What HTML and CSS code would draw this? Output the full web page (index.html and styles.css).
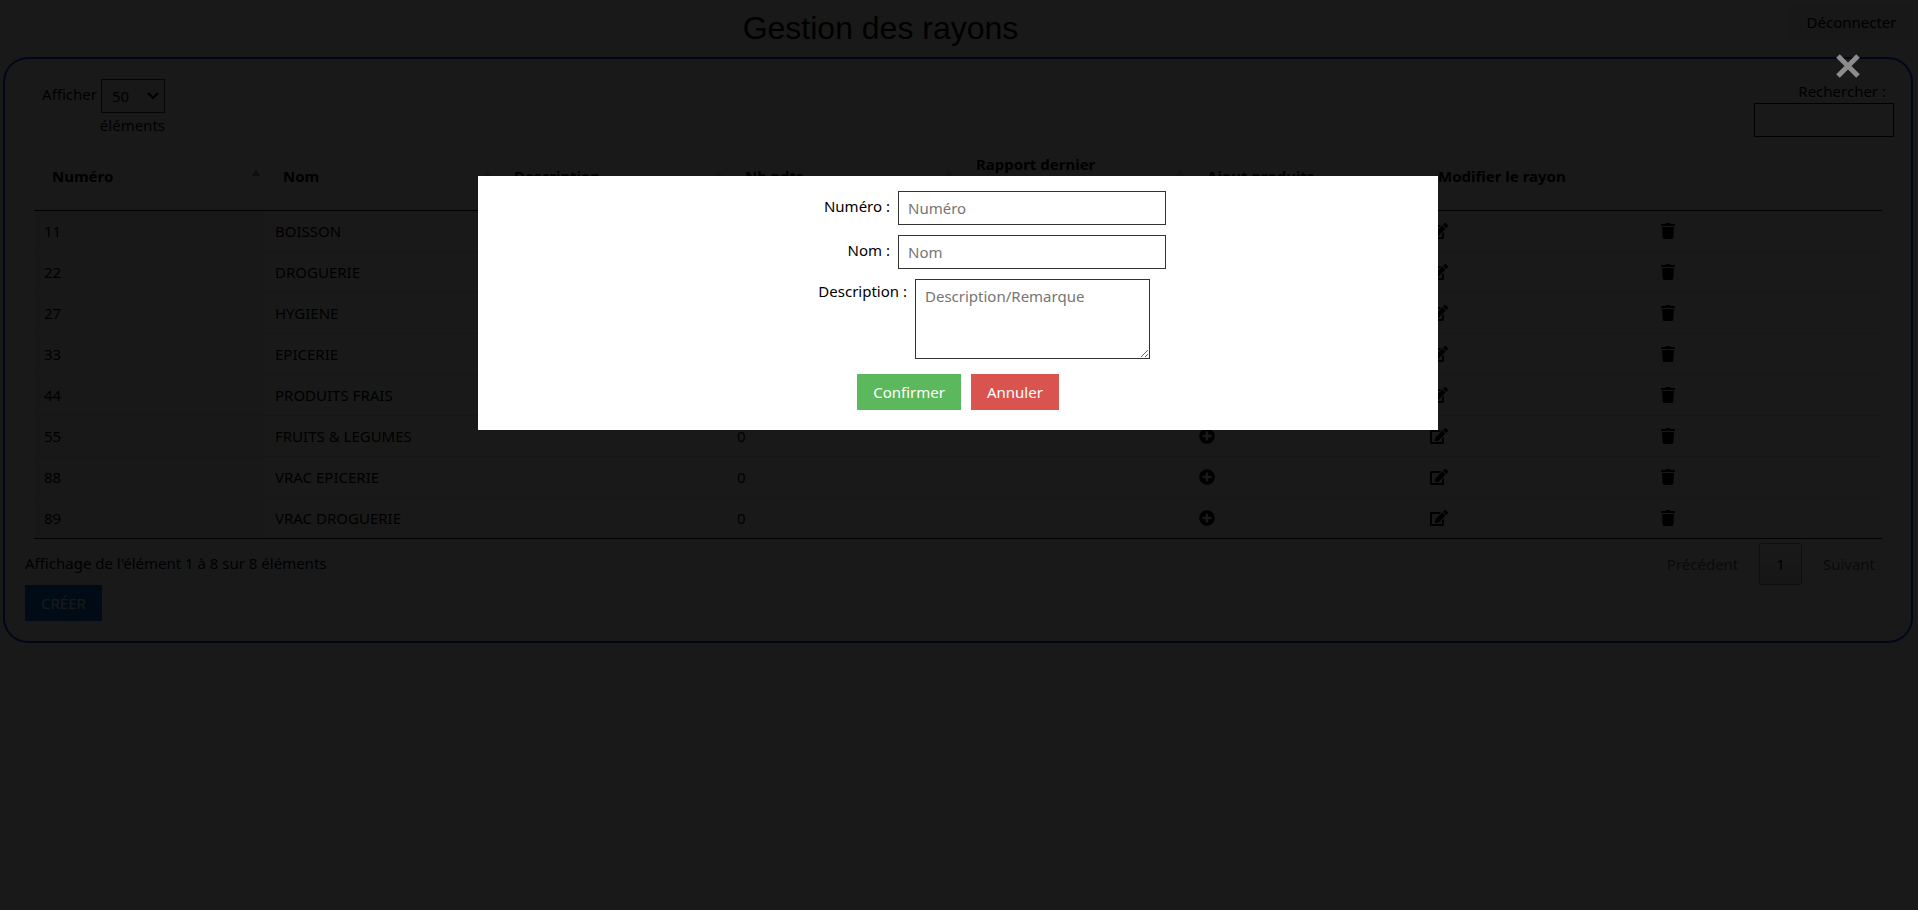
FILE: index.html
```html
<!DOCTYPE html>
<html lang="fr">
  <head>
    <meta charset="UTF-8" />
    <title>Gestion des rayons</title>
    <link rel="stylesheet" href="styles.css">
  </head>

  <body>
    <!-- icônes -->
    <svg class="sprite">
      <symbol id="plus" viewBox="0 0 512 512"><path d="M256 8C119 8 8 119 8 256s111 248 248 248 248-111 248-248S393 8 256 8zm144 276c0 6.600-5.400 12-12 12h-92v92c0 6.600-5.400 12-12 12h-56c-6.600 0-12-5.400-12-12v-92h-92c-6.600 0-12-5.400-12-12v-56c0-6.600 5.400-12 12-12h92v-92c0-6.600 5.400-12 12-12h56c6.600 0 12 5.400 12 12v92h92c6.600 0 12 5.400 12 12v56z" /></symbol>
      <symbol id="edit" viewBox="0 0 576 512"><path d="M402.600 83.200l90.200 90.200c3.800 3.800 3.800 10 0 13.800L274.400 405.600l-92.800 10.300c-12.400 1.400-22.900-9.100-21.500-21.500l10.300-92.800L388.800 83.200c3.800-3.800 10-3.800 13.800 0zm162-22.900l-48.800-48.800c-15.200-15.200-39.900-15.200-55.200 0l-35.400 35.400c-3.800 3.800-3.800 10 0 13.800l90.200 90.200c3.800 3.800 10 3.800 13.800 0l35.400-35.400c15.200-15.300 15.200-40 0-55.200zM384 346.200V448H64V128h229.800c3.200 0 6.200-1.300 8.500-3.500l40-40c7.600-7.600 2.200-20.500-8.500-20.500H48C21.500 64 0 85.500 0 112v352c0 26.500 21.500 48 48 48h352c26.500 0 48-21.500 48-48V306.200c0-10.700-12.900-16-20.500-8.500l-40 40c-2.200 2.300-3.500 5.300-3.500 8.500z" /></symbol>
      <symbol id="trash" viewBox="0 0 448 512"><path d="M432 32H312l-9.400-18.700A24 24 0 0 0 281.100 0H166.800a23.720 23.720 0 0 0-21.400 13.300L136 32H16A16 16 0 0 0 0 48v32a16 16 0 0 0 16 16h416a16 16 0 0 0 16-16V48a16 16 0 0 0-16-16zM53.200 467a48 48 0 0 0 47.900 45h245.800a48 48 0 0 0 47.900-45L416 128H32z" /></symbol>
    </svg>

    <header class="top">
      <h1>Gestion des rayons</h1>
      <button type="button" class="btn logout">Déconnecter</button>
    </header>

    <main class="panel">
      <div class="tools">
        <div class="length">
          <label for="length">Afficher</label>
          <div class="select">
            <select id="length">
              <option>10</option>
              <option>25</option>
              <option selected>50</option>
              <option>100</option>
            </select>
            <svg viewBox="0 0 12 8"><path d="M1 1l5 5 5-5" /></svg>
          </div>
          <span>éléments</span>
        </div>
        <div class="filter">
          <label for="search">Rechercher :</label>
          <input type="search" id="search" />
        </div>
      </div>

      <table>
        <thead>
          <tr>
            <th class="sort asc">Numéro</th>
            <th class="sort">Nom</th>
            <th class="sort">Description</th>
            <th class="sort">Nb pdts</th>
            <th class="sort">Rapport dernier inventaire</th>
            <th>Ajout produits</th>
            <th>Modifier le rayon</th>
            <th></th>
          </tr>
        </thead>
        <tbody></tbody>
      </table>

      <div class="bottom">
        <div class="info">Affichage de l'élément 1 à 8 sur 8 éléments</div>
        <nav class="pages">
          <button type="button" disabled>Précédent</button>
          <button type="button" class="current">1</button>
          <button type="button" disabled>Suivant</button>
        </nav>
      </div>
      <button type="button" class="btn create">CRÉER</button>
    </main>

    <!-- fenêtre de création d'un rayon -->
    <div class="modal">
      <button type="button" class="close" aria-label="Fermer">
        <svg viewBox="0 0 24 24"><path d="M2 2l20 20M22 2L2 22" /></svg>
      </button>
      <form class="modal-content">
        <div class="row">
          <label for="numero">Numéro :</label>
          <input type="text" id="numero" placeholder="Numéro" />
        </div>
        <div class="row">
          <label for="nom">Nom :</label>
          <input type="text" id="nom" placeholder="Nom" />
        </div>
        <div class="row area">
          <label for="description">Description :</label>
          <textarea id="description" placeholder="Description/Remarque"></textarea>
        </div>
        <div class="actions">
          <button type="button" class="btn success">Confirmer</button>
          <button type="button" class="btn danger">Annuler</button>
        </div>
      </form>
    </div>

    <script>
      const rayons = [
        [11, "BOISSON"],
        [22, "DROGUERIE"],
        [27, "HYGIENE"],
        [33, "EPICERIE"],
        [44, "PRODUITS FRAIS"],
        [55, "FRUITS &amp; LEGUMES"],
        [88, "VRAC EPICERIE"],
        [89, "VRAC DROGUERIE"]
      ]
      const icon = (name, label) =>
        `<td><button type="button" class="icon" aria-label="${label}"><svg class="${name}"><use href="#${name}" /></svg></button></td>`

      // une ligne par rayon
      document.querySelector("tbody").innerHTML = rayons
        .map(
          ([numero, nom]) =>
            `<tr><td>${numero}</td><td>${nom}</td><td></td><td>0</td><td></td>` +
            icon("plus", "Ajouter") +
            icon("edit", "Modifier") +
            icon("trash", "Supprimer") +
            "</tr>"
        )
        .join("")
    </script>
  </body>
</html>
```
FILE: styles.css
```css
* {
  box-sizing: border-box;
}

body {
  margin: 4px 5px 0 3px;
  font-family: "Noto Sans", sans-serif;
  font-size: 15px;
  line-height: 24px;
  color: #000;
  background-color: #fff;
}

button,
input,
select,
textarea {
  font: inherit;
  color: inherit;
  border-radius: 0;
}

.sprite {
  display: none;
}

.btn {
  height: 36px;
  padding: 0 16px;
  border: none;
  color: #fff;
}

/* en-tête */
.top {
  display: flex;
  gap: 32px;
  height: 53px;
}

.top h1 {
  flex: 1;
  margin: 0;
  font-family: "Liberation Sans", sans-serif;
  font-size: 32px;
  font-weight: normal;
  line-height: 48px;
  text-align: center;
}

.logout {
  width: 123px;
  color: #000;
  background-color: #efefef;
}

/* cadre principal */
.panel {
  padding: 20px 17px 20px 20px;
  border: 2px solid #0048ff;
  border-radius: 25px;
}

.tools {
  display: flex;
  justify-content: space-between;
  height: 63px;
}

.length {
  display: flex;
  flex-wrap: wrap;
  justify-content: flex-end;
  align-content: flex-start;
  gap: 0 4px;
  width: 140px;
  line-height: 30px;
}

.length span {
  line-height: 24px;
}

.select {
  position: relative;
}

.select select {
  display: block;
  width: 64px;
  height: 34px;
  padding: 0 10px;
  border: 1px solid #333;
  background-color: #f5f5f5;
  appearance: none;
}

.select svg {
  position: absolute;
  top: 13px;
  right: 6px;
  width: 12px;
  height: 8px;
  fill: none;
  stroke: #000;
  stroke-width: 2;
  pointer-events: none;
}

.filter {
  width: 140px;
  text-align: right;
}

.filter label {
  display: block;
  padding-right: 8px;
}

.filter input {
  display: block;
  width: 100%;
  height: 34px;
  padding: 0 10px;
  border: 1px solid #000;
  background-color: transparent;
}

/* tableau */
table {
  width: calc(100% - 21px);
  margin: 0 12px 0 9px;
  table-layout: fixed;
  border-collapse: separate;
  border-spacing: 0;
  border-bottom: 1px solid #111;
}

th {
  height: 69px;
  padding: 10px 18px;
  border-bottom: 1px solid #111;
  text-align: left;
}

.sort {
  position: relative;
  padding-right: 50px;
}

.sort::before,
.sort::after {
  content: "";
  position: absolute;
  top: 27px;
  right: 5px;
  border: 4px solid transparent;
  border-top-width: 0;
  border-bottom: 7px solid #d4d4d4;
}

.sort::after {
  top: 36px;
  border-top: 7px solid #d4d4d4;
  border-bottom-width: 0;
}

.asc::before {
  border-bottom-color: #8080c0;
}

.asc::after {
  display: none;
}

td {
  height: 41px;
  padding: 0 10px;
  border-top: 1px solid #ddd;
}

tbody tr:first-child td {
  height: 40px;
  border-top: none;
}

tbody tr:nth-child(odd) {
  background-color: #f9f9f9;
}

td:first-child {
  background-color: #f4f4f4;
}

.icon {
  display: block;
  padding: 0;
  border: none;
  background: none;
}

.icon svg {
  display: block;
  width: 16px;
  height: 16px;
}

.icon .edit {
  width: 18px;
}

.icon .trash {
  width: 14px;
}

/* pied du tableau */
.bottom {
  display: flex;
  justify-content: space-between;
  padding-top: 4px;
}

.info {
  padding-top: 8px;
}

.pages {
  display: flex;
  gap: 2px;
}

.pages button {
  height: 42px;
  padding: 0 18px;
  border: 1px solid transparent;
  border-radius: 2px;
  background: none;
}

.pages button:disabled {
  color: #666;
}

.pages .current {
  padding: 0 16px;
  border-color: #979797;
  background: linear-gradient(to bottom, #fff 0%, #dcdcdc 100%);
}

.create {
  display: block;
  background-color: #0275d8;
}

/* fenêtre modale */
.modal {
  position: fixed;
  inset: 0;
  padding: 176px 2px 0 0;
  background-color: rgba(0, 0, 0, 0.9);
}

.close {
  position: absolute;
  top: 54px;
  right: 58px;
  padding: 0;
  border: none;
  background: none;
}

.close svg {
  display: block;
  width: 24px;
  height: 24px;
  stroke: #8c8c8c;
  stroke-width: 5;
}

.modal-content {
  width: calc(50% + 2px);
  margin: 0 auto;
  padding: 15px 0 20px;
  background-color: #fff;
}

.row {
  display: flex;
  gap: 8px;
  margin-bottom: 10px;
}

.row label {
  width: calc(50% - 68px);
  line-height: 30px;
  text-align: right;
}

.row input,
.row textarea {
  width: 268px;
  height: 34px;
  padding: 0 9px;
  border: 1px solid #333;
  background-color: #fff;
}

.row.area {
  margin-bottom: 15px;
}

.area label {
  width: calc(50% - 51px);
  line-height: 24px;
}

.row textarea {
  width: 235px;
  height: 80px;
  padding: 4px 9px;
}

::placeholder {
  color: #757575;
}

.actions {
  display: flex;
  justify-content: center;
  gap: 10px;
}

.success {
  background-color: #5cb85c;
}

.danger {
  background-color: #d9534f;
}
```
